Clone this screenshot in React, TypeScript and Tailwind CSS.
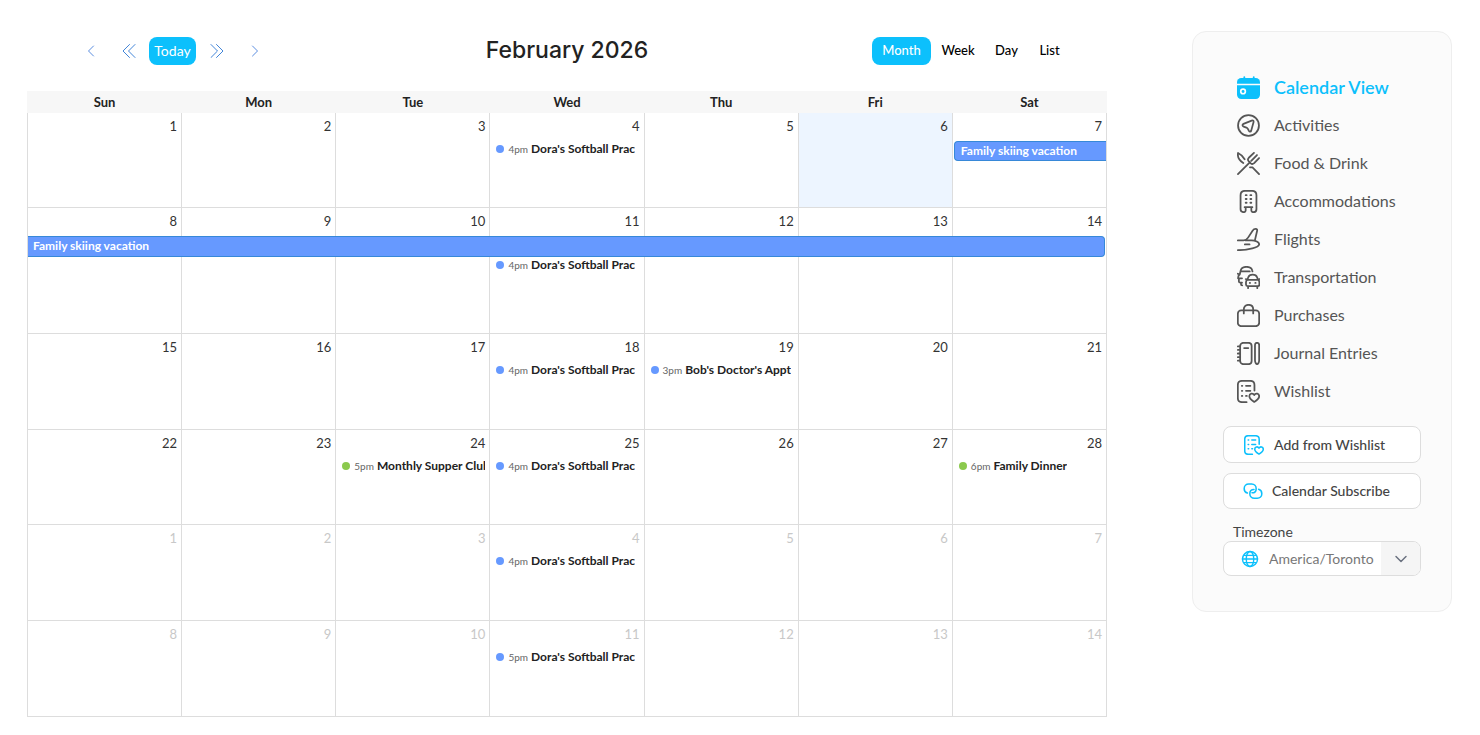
import type { ReactNode } from "react";
import { clsx } from "clsx";

type CalEvent = { time: string; title: string; color?: "blue" | "green" };
type Day = { num: number; other?: boolean; today?: boolean; event?: CalEvent };
type Week = { height: string; days: Day[]; bar?: "start" | "end" };

const softball: CalEvent = { time: "4pm", title: "Dora's Softball Prac" };

const makeDays = (start: number, events: Record<number, CalEvent> = {}, other = false): Day[] =>
    Array.from({ length: 7 }, (_, i) => ({
        num: start + i,
        other,
        today: !other && start + i === 6,
        event: events[start + i],
    }));

const weeks: Week[] = [
    { height: "h-[94px]", days: makeDays(1, { 4: softball }), bar: "start" },
    { height: "h-[126px]", days: makeDays(8, { 11: softball }), bar: "end" },
    { height: "h-24", days: makeDays(15, { 18: softball, 19: { time: "3pm", title: "Bob's Doctor's Appt" } }) },
    {
        height: "h-[95px]",
        days: makeDays(22, {
            24: { time: "5pm", title: "Monthly Supper Club", color: "green" },
            25: softball,
            28: { time: "6pm", title: "Family Dinner", color: "green" },
        }),
    },
    { height: "h-24", days: makeDays(1, { 4: softball }, true) },
    { height: "h-24", days: makeDays(8, { 11: { ...softball, time: "5pm" } }, true) },
];

const Icon = ({ children, className = "size-[23px]" }: { children: ReactNode; className?: string }) => (
    <svg
        viewBox="0 0 22 22"
        className={clsx("shrink-0", className)}
        fill="none"
        stroke="currentColor"
        strokeWidth="1.7"
        strokeLinecap="round"
        strokeLinejoin="round"
        aria-hidden="true"
    >
        {children}
    </svg>
);

const CalendarIcon = () => (
    <Icon>
        <path d="M7 1v3M16 1v3" />
        <path d="M4 2h14a4 4 0 0 1 4 4v1.3H0V6a4 4 0 0 1 4-4Z" fill="currentColor" stroke="none" />
        <path d="M0 8.800h22V18a4 4 0 0 1-4 4H4a4 4 0 0 1-4-4Z" fill="currentColor" stroke="none" />
        <circle cx="5.800" cy="14.800" r="2.200" stroke="white" strokeWidth="1.6" />
    </Icon>
);

const ActivitiesIcon = () => (
    <Icon>
        <circle cx="11" cy="11" r="10" />
        <path d="M6.200 9.400 14 6.300c1.400-.5 2.200.3 1.800 1.600l-2.200 8c-.4 1.300-1.600 1.400-2.200.3l-1-2c-.3-.6-.8-1-1.400-1.200l-2.600-.9c-1.500-.5-1.500-2.100-.2-2.700Z" />
    </Icon>
);

const FoodIcon = () => (
    <Icon>
        <path d="M.9 21.100 12 10.200M12.200 9.800l-1.100-1.100c-.9-1-.8-2.100.2-3.200L16.200.9M13.600 8.400l5.500-5.500M21.100 5.800l-4.700 4.900c-1.100 1-2.200 1.100-3.200.2l-1.100-1.100" />
        <path d="M6 10.500C2.500 8.300.2 5 1 .9c2.600 1.200 4.500 2.900 6.300 6M12.400 14.700h2.400l6.300 6.400" />
    </Icon>
);

const HotelIcon = () => (
    <Icon>
        <path d="M8.300 16.600v2.600a1.900 1.900 0 0 1-1.900 2c-2 0-3-.9-3-2.800V5c0-2.700 1.500-4.200 4.200-4.200h6.800c2.700 0 4.200 1.500 4.200 4.200v13.400c0 1.900-1 2.800-3 2.800a1.900 1.900 0 0 1-1.900-2v-2.600M7.300 16.400h7.400" />
        <path d="M8.300 5h.9M12.800 5h.9M8.300 8.600h.9M12.800 8.600h.9M8.300 12.200h.9M12.800 12.200h.9" />
    </Icon>
);

const FlightIcon = () => (
    <Icon>
        <path d="M.8 11.800h5.600c2 0 3-.8 4.200-2.600l4.300-6.600c.8-1.200 1.800-1.700 3-1.700 1.300 0 1.600.7 1.300 2l-2.200 9.400M8 11.800h6c3.600 0 7.200 1.900 7.200 3.700 0 2.300-3.500 3.200-6.500 3.900C10.300 20.500 5.500 21.200.8 21.200M7.500 15.700h4.500" />
    </Icon>
);

const CarsIcon = () => (
    <Icon>
        <path d="M2.600 8.200 3.600 4C4.200 1.700 5.500.8 9 .8s5 .9 5.500 3.200l.3 1.200M3.800 5.200h8.400M.8 7.400l1.600.8M2.500 8.200C1.300 9 1 10 1 11.800h3.800M1.800 12.200v2.600c0 .8.6 1.200 1.600 1.200h1.400M3.800 16v1.200c0 .8.400 1.300 1.200 1.300" />
        <path d="M9.900 13.200 10.800 10.700C11.400 9 12.600 8.200 15 8.200s3.600.8 4.200 2.500l.9 2.500M8.400 12.500l1.500.7h10.200l1.500-.7M9.900 13.200c-1 .6-1.300 1.200-1.300 2.300v2.300c0 1 .5 1.500 1.500 1.500h9.800c1 0 1.500-.5 1.500-1.500v-2.300c0-1.100-.3-1.700-1.300-2.300M12.200 16.200h.3M17.500 16.200h.3M10.600 19.500v1.700M19.400 19.500v1.700" />
    </Icon>
);

const BagIcon = () => (
    <Icon>
        <rect x=".8" y="6.200" width="20.400" height="15" rx="3.200" />
        <path d="M6.500 9V5.200C6.500 2.500 8.200.8 11 .8s4.500 1.700 4.500 4.400V9" />
    </Icon>
);

const JournalIcon = () => (
    <Icon>
        <rect x="3" y=".8" width="11" height="20.400" rx="3" />
        <path d="M.8 4.200h2.100M.8 7.600h2.100M.8 11h2.100M.8 14.400h2.100M.8 17.800h2.100M6.800 5.800h4" />
        <path d="M17.200 3c0-1.500.8-2.200 2-2.200s2 .7 2 2.200v14.500c0 1.500-.9 3.700-2 3.700s-2-2.200-2-3.700Z" />
    </Icon>
);

const WishlistIcon = ({ className }: { className?: string }) => (
    <Icon className={className}>
        <path d="M9.200 21.200H4.800c-2.800 0-4-1.200-4-4V4.800c0-2.800 1.200-4 4-4h7.900c2.800 0 4 1.200 4 4v5.300M4.600 5.600h.5M4.600 10.400h.5M4.600 15.200h.5M8.600 5.600h4.200M8.600 10.400h4.200M8.600 15.200h.8" />
        <path d="M16.500 21c-2.600-1.600-4.700-3.300-4.700-5.400 0-2.700 3.300-3.500 4.700-1.200 1.400-2.300 4.700-1.500 4.700 1.200 0 2.100-2.100 3.800-4.700 5.400Z" />
    </Icon>
);

const LinkIcon = () => (
    <Icon className="size-5">
        <path d="M4.800 13.200C2.700 12.600 1.300 10.800 1.300 8.400c0-3 2.200-5 5-5h3.200c2.900 0 5 2.100 5 5s-2.100 4.600-4.600 4.600" />
        <path d="M17.200 9.200c2.100.6 3.500 2.400 3.500 4.800 0 3-2.200 5-5 5h-3.200c-2.900 0-5-2.100-5-5s2.100-4.600 4.600-4.600" />
    </Icon>
);

const GlobeIcon = () => (
    <Icon className="size-[18px]">
        <circle cx="11" cy="11" r="9.200" />
        <ellipse cx="11" cy="11" rx="4.600" ry="9.200" />
        <path d="M3.200 6.600h15.600M1.800 11h18.400M3.200 15.400h15.600" />
    </Icon>
);

const Chevrons = ({ d, className }: { d: string; className: string }) => (
    <svg viewBox="0 0 14 14" className={className} fill="none" stroke="currentColor" strokeLinecap="round" strokeLinejoin="round" aria-hidden="true">
        <path d={d} />
    </svg>
);

const navItems = [
    { label: "Calendar View", icon: <CalendarIcon />, active: true },
    { label: "Activities", icon: <ActivitiesIcon /> },
    { label: "Food & Drink", icon: <FoodIcon /> },
    { label: "Accommodations", icon: <HotelIcon /> },
    { label: "Flights", icon: <FlightIcon /> },
    { label: "Transportation", icon: <CarsIcon /> },
    { label: "Purchases", icon: <BagIcon /> },
    { label: "Journal Entries", icon: <JournalIcon /> },
    { label: "Wishlist", icon: <WishlistIcon /> },
];

const EventRow = ({ event }: { event: CalEvent }) => (
    <a href="#" className="mr-1 ml-0.5 flex h-4 items-center overflow-hidden whitespace-nowrap pl-1 leading-4">
        <span className={clsx("mr-1 size-2 shrink-0 rounded-full", event.color === "green" ? "bg-[#8bc94d]" : "bg-[#6699ff]")} />
        <span className="mr-[3px] shrink-0 text-[10px] text-[#666]">{event.time}</span>
        <span className="overflow-hidden text-xs font-bold text-[#222]">{event.title}</span>
    </a>
);

const DayCell = ({ day, bar, index }: { day: Day; bar?: "start" | "end"; index: number }) => (
    <td className={clsx("border border-[#ddd] p-0 align-top", day.today && "bg-[#edf5ff]")}>
        <div className={clsx("h-7 pr-1 pt-[3px] text-right text-[13px] leading-5", day.other ? "text-[#c8c8c8]" : "text-[#333]")}>{day.num}</div>
        {bar === "start" && index === 6 && (
            <a href="#" className="ml-px flex h-5 items-center rounded-l border border-r-0 border-[#3788d8] bg-[#6699ff] pl-[6px] text-xs font-bold text-white">
                Family skiing vacation
            </a>
        )}
        {bar === "end" && (
            <div className="relative h-[21px]">
                {index === 0 && (
                    <a href="#" className="absolute inset-y-0 left-0 z-10 flex w-[703%] items-center rounded-r border border-l-0 border-[#3788d8] bg-[#6699ff] pl-[5px] text-xs font-bold text-white">
                        Family skiing vacation
                    </a>
                )}
            </div>
        )}
        {day.event && <EventRow event={day.event} />}
    </td>
);

const Toolbar = () => (
    <div className="grid h-[60px] grid-cols-3 items-start pt-[6px]">
        <div className="flex h-7 items-center pl-[57px]">
            <button aria-label="Previous month" className="flex w-[14px] justify-center text-[#5a8de0]">
                <Chevrons d="M9.500 2 4.500 7l5 5" className="size-[14px]" />
            </button>
            <button aria-label="Previous year" className="ml-6 flex w-[14px] justify-center text-[#4285d8]">
                <Chevrons d="M7.500.5 1 7l6.500 6.500M13 .5 6.500 7l6.500 6.500" className="size-[14px]" />
            </button>
            <button className="ml-[13px] h-7 w-[47px] rounded-lg bg-[#0cc0fc] text-sm text-white">Today</button>
            <button aria-label="Next year" className="ml-[14px] flex w-[14px] justify-center text-[#4285d8]">
                <Chevrons d="M1 .5 7.500 7 1 13.500M6.500.5 13 7l-6.500 6.500" className="size-[14px]" />
            </button>
            <button aria-label="Next month" className="ml-6 flex w-[14px] justify-center text-[#5a8de0]">
                <Chevrons d="m4.500 2 5 5-5 5" className="size-[14px]" />
            </button>
        </div>
        <h1 className="text-center font-[Inter,sans-serif] text-[23px] leading-[26px] font-medium text-[#222]">February 2026</h1>
        <div className="flex h-7 items-center justify-end pr-9 text-[13px] font-medium text-black">
            <button className="h-7 w-[59px] rounded-lg bg-[#0cc0fc] text-white">Month</button>
            <button className="w-[54px]">Week</button>
            <button className="w-[43px]">Day</button>
            <button className="w-[43px]">List</button>
        </div>
    </div>
);

const Sidebar = () => (
    <aside className="w-[260px] shrink-0 rounded-[14px] border border-[#eee] bg-[#fbfbfb] px-[30px] pt-9 pb-[35px]">
        <nav>
            {navItems.map((item) => (
                <a
                    key={item.label}
                    href="#"
                    className={clsx(
                        "flex h-[38px] items-center gap-[14px] pl-[14px]",
                        item.active ? "text-lg font-semibold text-[#0cc0fc]" : "text-base text-[#555]",
                    )}
                >
                    {item.icon}
                    {item.label}
                </a>
            ))}
        </nav>
        <button className="mt-4 flex h-[37px] w-full items-center rounded-lg border border-[#ddd] bg-white pl-5 text-sm font-medium text-[#444]">
            <span className="mr-[10px] text-[#0cc0fc]"><WishlistIcon className="size-5" /></span>
            Add from Wishlist
        </button>
        <button className="mt-[10px] flex h-9 w-full items-center rounded-lg border border-[#ddd] bg-white pl-[19px] text-sm font-medium text-[#444]">
            <span className="mr-[9px] text-[#0cc0fc]"><LinkIcon /></span>
            Calendar Subscribe
        </button>
        <label htmlFor="timezone" className="mt-[13px] block pl-[10px] text-sm leading-[19px] text-[#444]">Timezone</label>
        <div className="relative h-[35px] overflow-hidden rounded-lg border border-[#ddd] bg-white">
            <select id="timezone" className="h-full w-full appearance-none bg-transparent pl-[45px] text-sm text-[#777]">
                <option>America/Toronto</option>
            </select>
            <span className="pointer-events-none absolute inset-y-0 left-[17px] flex items-center text-[#0cc0fc]"><GlobeIcon /></span>
            <span className="pointer-events-none absolute inset-y-0 right-0 flex w-[39px] items-center justify-center bg-[#f5f5f5] text-[#6b7280]">
                <Chevrons d="m2 4.500 5 5 5-5" className="size-[14px] stroke-[1.5]" />
            </span>
        </div>
    </aside>
);

const App = () => {
    return (
        <div className="flex items-start gap-[85px] bg-white py-[31px] pr-7 pl-[27px] font-[Lato,sans-serif]">
            <main className="min-w-0 flex-1 pb-4">
                <Toolbar />
                <table className="w-full table-fixed border-collapse">
                    <thead>
                        <tr className="h-[22px] bg-[#f7f7f7]">
                            {["Sun", "Mon", "Tue", "Wed", "Thu", "Fri", "Sat"].map((name) => (
                                <th key={name} scope="col" className="border-x border-[#f7f7f7] p-0 text-[13px] leading-[22px] font-bold text-[#222]">{name}</th>
                            ))}
                        </tr>
                    </thead>
                    <tbody>
                        {weeks.map((week, w) => (
                            <tr key={w} className={clsx(week.height, w === 0 && "[&>td]:border-t-0")}>
                                {week.days.map((day, i) => (
                                    <DayCell key={i} day={day} bar={week.bar} index={i} />
                                ))}
                            </tr>
                        ))}
                    </tbody>
                </table>
            </main>
            <Sidebar />
        </div>
    );
};

export default App;
